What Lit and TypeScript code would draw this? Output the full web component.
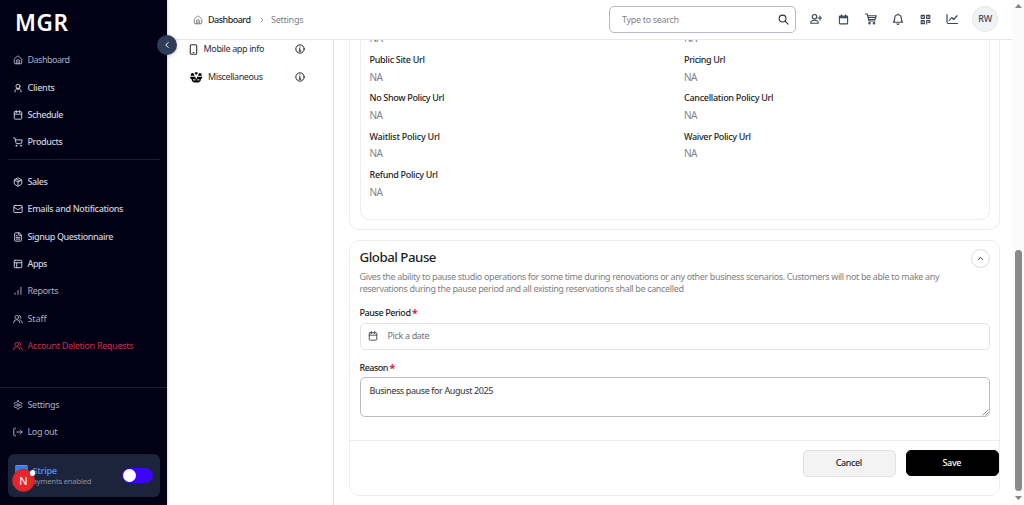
import { LitElement, html, css, svg } from "lit";
import { customElement, property } from "lit/decorators.js";

/* A run of text whose tracking is adjusted so that it fills a given width. */
@customElement("fit-text")
class FitText extends LitElement {
  @property() text = "";
  @property({ type: Number }) w = 0;
  static styles = css`
    :host { display: inline-block; white-space: nowrap; }
    .run { display: inline-block; }
  `;
  updated() {
    const run = this.renderRoot.querySelector(".run") as HTMLElement;
    run.style.letterSpacing = "0px";
    const natural = run.getBoundingClientRect().width;
    if (this.w && this.text.length > 1) {
      const gap = (this.w - natural) / (this.text.length - 1);
      run.style.letterSpacing = gap.toFixed(3) + "px";
      run.style.marginRight = (-gap).toFixed(3) + "px";
    }
  }
  render() {
    return html`<span class="run">${this.text}</span>`;
  }
}

const t = (text: string, w: number) => html`<fit-text .text=${text} .w=${w}></fit-text>`;

const shapes: Record<string, unknown> = {
  home: svg`<path d="M3 10.5a2 2 0 0 1 .7-1.5l7-6a2 2 0 0 1 2.6 0l7 6a2 2 0 0 1 .7 1.5V19a2 2 0 0 1-2 2H5a2 2 0 0 1-2-2z"/><path d="M8 21v-6a4 4 0 0 1 8 0v6M12 15v6"/>`,
  user: svg`<circle cx="12" cy="8" r="5"/><path d="M4.5 21.5c0-5 3-8.5 7.5-8.5s7.500 3.500 7.500 8.500M9 13.500l3 3 3-3"/>`,
  calendar: svg`<rect x="3" y="4" width="18" height="18" rx="2"/><path d="M8 1.500v5M16 1.500v5M3 10h18"/>`,
  cart: svg`<circle cx="8" cy="21" r="1.300"/><circle cx="19" cy="21" r="1.300"/><path d="M1.500 2h3l2.700 12.400a2 2 0 0 0 2 1.600h9.300a2 2 0 0 0 2-1.600L22 7H5.500"/>`,
  box: svg`<path d="M21 8a2 2 0 0 0-1-1.700l-7-4a2 2 0 0 0-2 0l-7 4A2 2 0 0 0 3 8v8a2 2 0 0 0 1 1.700l7 4a2 2 0 0 0 2 0l7-4a2 2 0 0 0 1-1.700z"/><path d="m3.500 7 8.500 5 8.500-5M12 22V12M7.500 4.500 16.500 9.500"/>`,
  mail: svg`<rect x="2" y="3.500" width="20" height="17" rx="2"/><path d="m2.500 7.500 8.500 5.700a2 2 0 0 0 2 0l8.500-5.700"/>`,
  file: svg`<path d="M14.500 2H6a2 2 0 0 0-2 2v16a2 2 0 0 0 2 2h12a2 2 0 0 0 2-2V7.500z"/><path d="M14 2v6h6M8 9h2M8 13h8M8 17h8"/>`,
  layout: svg`<rect x="3" y="3" width="18" height="18" rx="2"/><path d="M3 9h18M9 21V9"/>`,
  bars: svg`<path d="M5 20v-3M12 20V11M19 20V3"/>`,
  users: svg`<circle cx="9" cy="8" r="4.500"/><path d="M1.500 21a7.500 7.500 0 0 1 15 0M15 3.500a4.500 4.500 0 0 1 1.500 8.300M18 14.500a8 8 0 0 1 4.500 6.500"/>`,
  gear: svg`<path d="M12.200 2h-.4a2 2 0 0 0-2 2v.2a2 2 0 0 1-1 1.700l-.4.300a2 2 0 0 1-2 0l-.2-.1a2 2 0 0 0-2.700.700l-.2.400a2 2 0 0 0 .7 2.700l.2.100a2 2 0 0 1 1 1.700v.600a2 2 0 0 1-1 1.700l-.2.100a2 2 0 0 0-.7 2.700l.2.400a2 2 0 0 0 2.700.700l.2-.1a2 2 0 0 1 2 0l.4.300a2 2 0 0 1 1 1.700v.200a2 2 0 0 0 2 2h.4a2 2 0 0 0 2-2v-.2a2 2 0 0 1 1-1.700l.4-.3a2 2 0 0 1 2 0l.2.100a2 2 0 0 0 2.700-.7l.2-.4a2 2 0 0 0-.7-2.700l-.2-.1a2 2 0 0 1-1-1.700v-.6a2 2 0 0 1 1-1.700l.2-.1a2 2 0 0 0 .7-2.700l-.2-.4a2 2 0 0 0-2.700-.7l-.2.100a2 2 0 0 1-2 0l-.4-.3a2 2 0 0 1-1-1.700V4a2 2 0 0 0-2-2z"/><circle cx="12" cy="12" r="3"/>`,
  logout: svg`<path d="M6 3H3.500a1.500 1.500 0 0 0-1.500 1.500v15A1.500 1.500 0 0 0 3.500 21H6M9 12h13M17 7l5 5-5 5"/>`,
  left: svg`<path d="m15 6-6 6 6 6"/>`,
  right: svg`<path d="m9 6 6 6-6 6"/>`,
  up: svg`<path d="m6 15 6-6 6 6"/>`,
  search: svg`<circle cx="10" cy="10" r="7.500"/><path d="m15.500 15.500 6.500 6.500"/>`,
  userplus: svg`<circle cx="9" cy="7.500" r="4.500"/><path d="M1.500 20.500c0-4 3-6 7.500-6s7.500 2 7.500 6zM20 6v8M16 10h8"/>`,
  calfill: svg`<rect x="3" y="4.500" width="18" height="17" rx="1.500"/><path d="M4 7h16" stroke-width="4"/><path d="M7.500 1.500v4M16.500 1.500v4"/>`,
  cartfill: svg`<path d="M0.500 2h4l3.500 14h12M5.500 5.500H22.500l-2.500 7.500H7.500M6.500 9h15"/><circle cx="9" cy="20.500" r="1.500"/><circle cx="18" cy="20.500" r="1.500"/>`,
  bell: svg`<path d="M3 18.500h18c-2-2-2.500-4-2.500-8.500a6.500 6.500 0 0 0-13 0c0 4.500-.5 6.500-2.500 8.500zM12 3.500V1.500M10 21.500a2.300 2.300 0 0 0 4 0"/>`,
  qr: svg`<rect x="2.500" y="3" width="7" height="6.500"/><rect x="14.500" y="3" width="7" height="6.500"/><rect x="2.500" y="14.500" width="7" height="6.500"/><path d="M14.500 22v-7.500h7v4h-4"/><path d="M5.500 6.200h1M17.500 6.200h1M5.500 17.700h1"/>`,
  chart: svg`<path d="M2 3v15a3 3 0 0 0 3 3h18M6.500 15l5-6 4 4 6.500-7.500"/>`,
  phone: svg`<rect x="5" y="1.500" width="14" height="21" rx="2.500"/><path d="M11 18.500h2"/>`,
  info: svg`<circle cx="12" cy="12" r="10"/><path d="M12 17v-5.500h-1.500M12 7v.6M10 17h4"/>`,
  misc: svg`<path fill="currentColor" stroke="none" d="M0 11h10.500v3.500h3V11H24c-.5 3-1.500 4-3 4.500 0 3.500-2 6-5 6.500H8c-3-.5-5-3-5-6.500-1.500-.5-2.500-1.500-3-4.500zM1.500 9C1 5 4 3 6.500 4.500L9 9zM22.500 9C23 5 20 3 17.500 4.500L15 9zM8.500 4c1-2 6-2 7 0L12 7.500z"/><path stroke="#fff" stroke-width="1.800" d="M6.500 17h3.500M14 17h3.500"/>`,
};

const icon = (name: string, cls = "") =>
  html`<svg class="icon ${cls}" viewBox="0 0 24 24" fill="none" stroke="currentColor" stroke-width="2.300" stroke-linecap="round" stroke-linejoin="round">${shapes[name]}</svg>`;

type Item = [string, string, number, string?];

const primary: Item[] = [
  ["home", "Dashboard", 42.5, "soft"],
  ["user", "Clients", 27.5],
  ["calendar", "Schedule", 36],
  ["cart", "Products", 35.5],
];
const secondary: Item[] = [
  ["box", "Sales", 20.5],
  ["mail", "Emails and Notifications", 96],
  ["file", "Signup Questionnaire", 86],
  ["layout", "Apps", 20],
  ["bars", "Reports", 31, "soft"],
  ["users", "Staff", 19, "soft"],
  ["users", "Account Deletion Requests", 106, "danger"],
];
const footer: Item[] = [
  ["gear", "Settings", 32, "soft"],
  ["logout", "Log out", 30, "soft"],
];
const fields: [string, number][] = [
  ["", 0], ["", 0],
  ["Public Site Url", 55.5], ["Pricing Url", 41.5],
  ["No Show Policy Url", 75], ["Cancellation Policy Url", 89.5],
  ["Waitlist Policy Url", 70.500], ["Waiver Policy Url", 67],
  ["Refund Policy Url", 68.500],
];

@customElement("app-root")
class AppRoot extends LitElement {
  static styles = css`
    :host { display: block; width: 1024px; height: 505px; overflow: hidden; background: #fff; color: #18181b;
      font: 400 9px/12px "Noto Sans", "Open Sans", sans-serif; }
    * { box-sizing: border-box; }
    .icon { display: block; width: 10px; height: 10px; flex: none; }
    .shell { display: flex; height: 505px; }
    .side { width: 167px; flex: none; background: #020015; position: relative; z-index: 2; display: flex; flex-direction: column;
      box-shadow: 0 0 3px rgba(40, 40, 60, .28); }
    .brand { height: 46.500px; padding: 8px 0 0 15px; color: #fff; font-size: 22.500px; line-height: 29px; font-weight: 600; }
    .nav { display: flex; flex-direction: column; }
    .item { height: 27.350px; padding-left: 12.500px; display: flex; align-items: center; gap: 5px; color: #cbd0de; font-weight: 500; }
    .item.soft { color: #a9afc0; font-weight: 400; }
    .item.danger { color: #c5304a; font-weight: 400; }
    .rule { height: 1px; margin: 3.500px 7.500px 8px; background: #1a1c31; }
    .rule.wide { margin: 27px 0 3.500px; background: #1b1f31; }
    .toggle { position: absolute; left: 157px; top: 34.500px; width: 20px; height: 20px; border-radius: 50%; background: #2f3d58; color: #fff;
      display: flex; align-items: center; justify-content: center; box-shadow: 0 1px 4px rgba(0, 0, 0, .2); }
    .toggle .icon { width: 10px; height: 10px; }
    .stripe { position: relative; margin: 8.500px 7.500px 0 8px; height: 42.500px; border-radius: 6px; background: #1c243c; padding: 10.500px 7px 0 24.500px;
      display: flex; justify-content: space-between; }
    .sname { color: #4c86ea; font-weight: 600; line-height: 12px; font-size: 9px; }
    .ssub { color: #8791a4; font-size: 7.700px; line-height: 9px; }
    .switch { width: 31px; height: 15.500px; margin-top: 3px; border-radius: 8px; background: #3d05f5; padding: 1px; }
    .knob { width: 13.500px; height: 13.500px; border-radius: 50%; background: #fff; }
    .cardico { position: absolute; left: 7px; top: 11px; width: 12.500px; height: 9px; border-radius: 1.500px; background: #3b7be4; border-top: 1px solid #5593f2; }
    .badge { position: absolute; left: 4px; top: 15px; width: 23px; height: 23px; border-radius: 50%; background: #e3282d; border: 1.500px solid #b9252c;
      color: #fff; display: flex; align-items: center; justify-content: center; font-size: 11px; }
    .dot { position: absolute; left: 21.500px; top: 16px; width: 5.500px; height: 5.500px; border-radius: 50%; background: #fff; }

    .main { width: 845px; flex: none; display: flex; flex-direction: column; }
    .top { height: 39.500px; flex: none; border-bottom: 1px solid #e3e6ea; display: flex; align-items: center; padding-left: 26px; background: #fff; position: relative; z-index: 1; }
    .crumb { display: flex; align-items: center; width: 416px; color: #7c8089; padding-top: 1px; }
    .crumb .strong { color: #27292e; font-weight: 500; margin-left: 5px; }
    .crumb .sep { width: 8px; height: 8px; margin: 0 5.500px 0 6.500px; }
    .search { width: 187px; height: 27px; border: 1px solid #b6b9bf; border-radius: 5px; display: flex; align-items: center; justify-content: space-between;
      padding: 1px 6px 0 12px; color: #83868c; }
    .search .icon { width: 11px; height: 11px; color: #2c2f35; }
    .tools { display: flex; align-items: center; margin-left: 14px; gap: 15.300px; color: #3c4554; }
    .tools .icon { width: 12px; height: 12px; }
    .tools .icon.small { width: 11px; height: 11px; margin: 0 .500px; }
    .avatar { width: 26px; height: 26px; margin-left: -1.500px; border-radius: 50%; background: #f0f2f4; border: 1px solid #e5e7eb; color: #3f4756; font-weight: 500;
      display: flex; align-items: center; justify-content: center; font-size: 9px; }

    .body { display: flex; flex: 1; min-height: 0; overflow: hidden; }
    .sub { width: 167px; flex: none; border-right: 1px solid #dcdfe3; padding: 0 28px 0 22px; color: #2b2e35; }
    .srow { height: 28px; display: flex; align-items: center; }
    .srow:first-child { height: 28px; margin-top: -4.500px; }
    .srow .phone { margin-right: 4.500px; margin-left: -1px; width: 11px; height: 11px; }
    .srow .misc { width: 12.500px; height: 12.500px; margin: 0 6px 0 .500px; color: #000; }
    .srow .info { margin-left: auto; color: #17181b; }
    .content { width: 678px; padding: 0 12px 0 15px; }
    .card { border: 1px solid #ededef; border-radius: 10px; background: #fff; }
    .first { height: 216.500px; margin-top: -26px; padding: 0 9.500px; }
    .inner { height: 205.500px; border: 1px solid #ededef; border-radius: 9px; padding: 0 9px; display: grid; grid-template-columns: 314.500px 1fr; grid-auto-rows: 38.400px; align-content: start; }
    .field { line-height: 12px; }
    .label { color: #222428; font-weight: 500; height: 12px; }
    .na { color: #7d818c; font-size: 10px; margin-top: 4.800px; height: 12px; }
    .second { height: 256px; margin-top: 9.500px; display: flex; flex-direction: column; }
    .form { padding: 8px 9.500px 0; height: 199.500px; }
    .head { display: flex; justify-content: space-between; align-items: flex-start; }
    .title { font-size: 13.300px; line-height: 17px; font-weight: 500; color: #1d1f23; }
    .desc { color: #81817f; line-height: 12.500px; margin-top: 5px; }
    .desc fit-text { display: block; height: 12.500px; }
    .round { width: 19px; height: 19px; border: 1px solid #d9dce2; border-radius: 50%; display: flex; align-items: center; justify-content: center; margin-top: .500px; }
    .round .icon { width: 9px; height: 9px; }
    .flabel { display: flex; gap: 1px; color: #222428; font-weight: 500; margin-top: 11px; height: 12px; }
    .reason { margin-top: 11.500px; }
    .req { color: #ec1337; font-size: 10.500px; font-weight: 700; line-height: 13px; }
    .date { height: 27.500px; margin-top: 4px; border: 1px solid #e1e3e7; border-radius: 5px; display: flex; align-items: center; padding-left: 8px; gap: 9.500px; color: #6e727a; }
    .date .icon { color: #454a54; margin-left: -.500px; }
    .area { height: 40px; margin-top: 3px; border: 1px solid #b9bcc4; border-radius: 5px; padding: 7.500px 9px; display: flex; color: #303237; position: relative; }
    .grip { position: absolute; right: 0; bottom: 0; width: 7px; height: 7px; color: #777; }
    .actions { border-top: 1px solid #ededee; display: flex; justify-content: flex-end; gap: 10px; padding: 9px .500px 0 0; height: 54px; }
    .btn { width: 93px; height: 26.500px; border-radius: 5px; display: flex; align-items: center; justify-content: center; font-weight: 500; border: 1px solid #dfe1e6; background: #f3f3f4; color: #1d1f23; }
    .btn.dark { background: #000; color: #fff; border-color: #000; height: 26px; }
    .scroll { width: 12px; flex: none; background: #fbfbfb; display: flex; flex-direction: column; align-items: center; padding: 4px 0; }
    .scroll svg { width: 7px; height: 5px; display: block; fill: #858585; }
    .thumb { width: 7px; height: 241px; border-radius: 4px; background: #8a8a8a; margin: 241px 0 4px; }
  `;

  private item = ([ic, label, w, tone]: Item) =>
    html`<div class="item ${tone ?? ""}">${icon(ic)}${t(label, w)}</div>`;

  render() {
    return html`
      <div class="shell">
        <aside class="side">
          <div class="brand">${t("MGR", 53)}</div>
          <nav class="nav">${primary.map(this.item)}</nav>
          <div class="rule"></div>
          <nav class="nav">${secondary.map(this.item)}</nav>
          <div class="rule wide"></div>
          <nav class="nav">${footer.map(this.item)}</nav>
          <div class="stripe">
            <div>
              <div class="sname">${t("Stripe", 24.500)}</div>
              <div class="ssub">${t("ayments enabled", 59)}</div>
            </div>
            <div class="switch"><div class="knob"></div></div>
            <div class="cardico"></div>
            <div class="badge">N</div>
            <div class="dot"></div>
          </div>
          <div class="toggle">${icon("left")}</div>
        </aside>
        <main class="main">
          <header class="top">
            <div class="crumb">
              ${icon("home")}<span class="strong">${t("Dashboard", 43)}</span>${icon("right", "sep")}${t("Settings", 32.500)}
            </div>
            <div class="search">${t("Type to search", 57)}${icon("search")}</div>
            <div class="tools">
              ${icon("userplus")}${icon("calfill", "small")}${icon("cartfill")}${icon("bell")}${icon("qr", "small")}${icon("chart")}
              <div class="avatar">${t("RW", 14)}</div>
            </div>
          </header>
          <div class="body">
            <div class="sub">
              <div class="srow">${icon("phone", "phone")}${t("Mobile app info", 61)}${icon("info", "info")}</div>
              <div class="srow">${icon("misc", "misc")}${t("Miscellaneous", 55)}${icon("info", "info")}</div>
            </div>
            <div class="content">
              <section class="card first">
                <div class="inner">
                  ${fields.map(([label, w]) => html`<div class="field">
                    <div class="label">${label ? t(label, w) : ""}</div>
                    <div class="na">${t("NA", 13.500)}</div>
                  </div>`)}
                </div>
              </section>
              <section class="card second">
                <div class="form">
                  <div class="head">
                    <div>
                      <div class="title">${t("Global Pause", 77)}</div>
                      <div class="desc">
                        ${t("Gives the ability to pause studio operations for some time during renovations or any other business scenarios. Customers will not be able to make any", 580)}
                        ${t("reservations during the pause period and all existing reservations shall be cancelled", 324.500)}
                      </div>
                    </div>
                    <div class="round">${icon("up")}</div>
                  </div>
                  <div class="flabel">${t("Pause Period", 51.500)}<span class="req">*</span></div>
                  <div class="date">${icon("calendar")}${t("Pick a date", 42)}</div>
                  <div class="flabel reason">${t("Reason", 29)}<span class="req">*</span></div>
                  <div class="area">${t("Business pause for August 2025", 124)}
                    <svg class="grip" viewBox="0 0 7 7" fill="none" stroke="currentColor" stroke-width=".8"><path d="M.5 6.500l6-6M3.500 6.500l3-3"/></svg>
                  </div>
                </div>
                <div class="actions">
                  <div class="btn">${t("Cancel", 26.500)}</div>
                  <div class="btn dark">${t("Save", 19)}</div>
                </div>
              </section>
            </div>
          </div>
        </main>
        <div class="scroll">
          <svg viewBox="0 0 7 5"><path d="M3.500 0 7 4H0z"/></svg>
          <div class="thumb"></div>
          <svg viewBox="0 0 7 5"><path d="M0 1h7L3.500 5z"/></svg>
        </div>
      </div>
    `;
  }
}
